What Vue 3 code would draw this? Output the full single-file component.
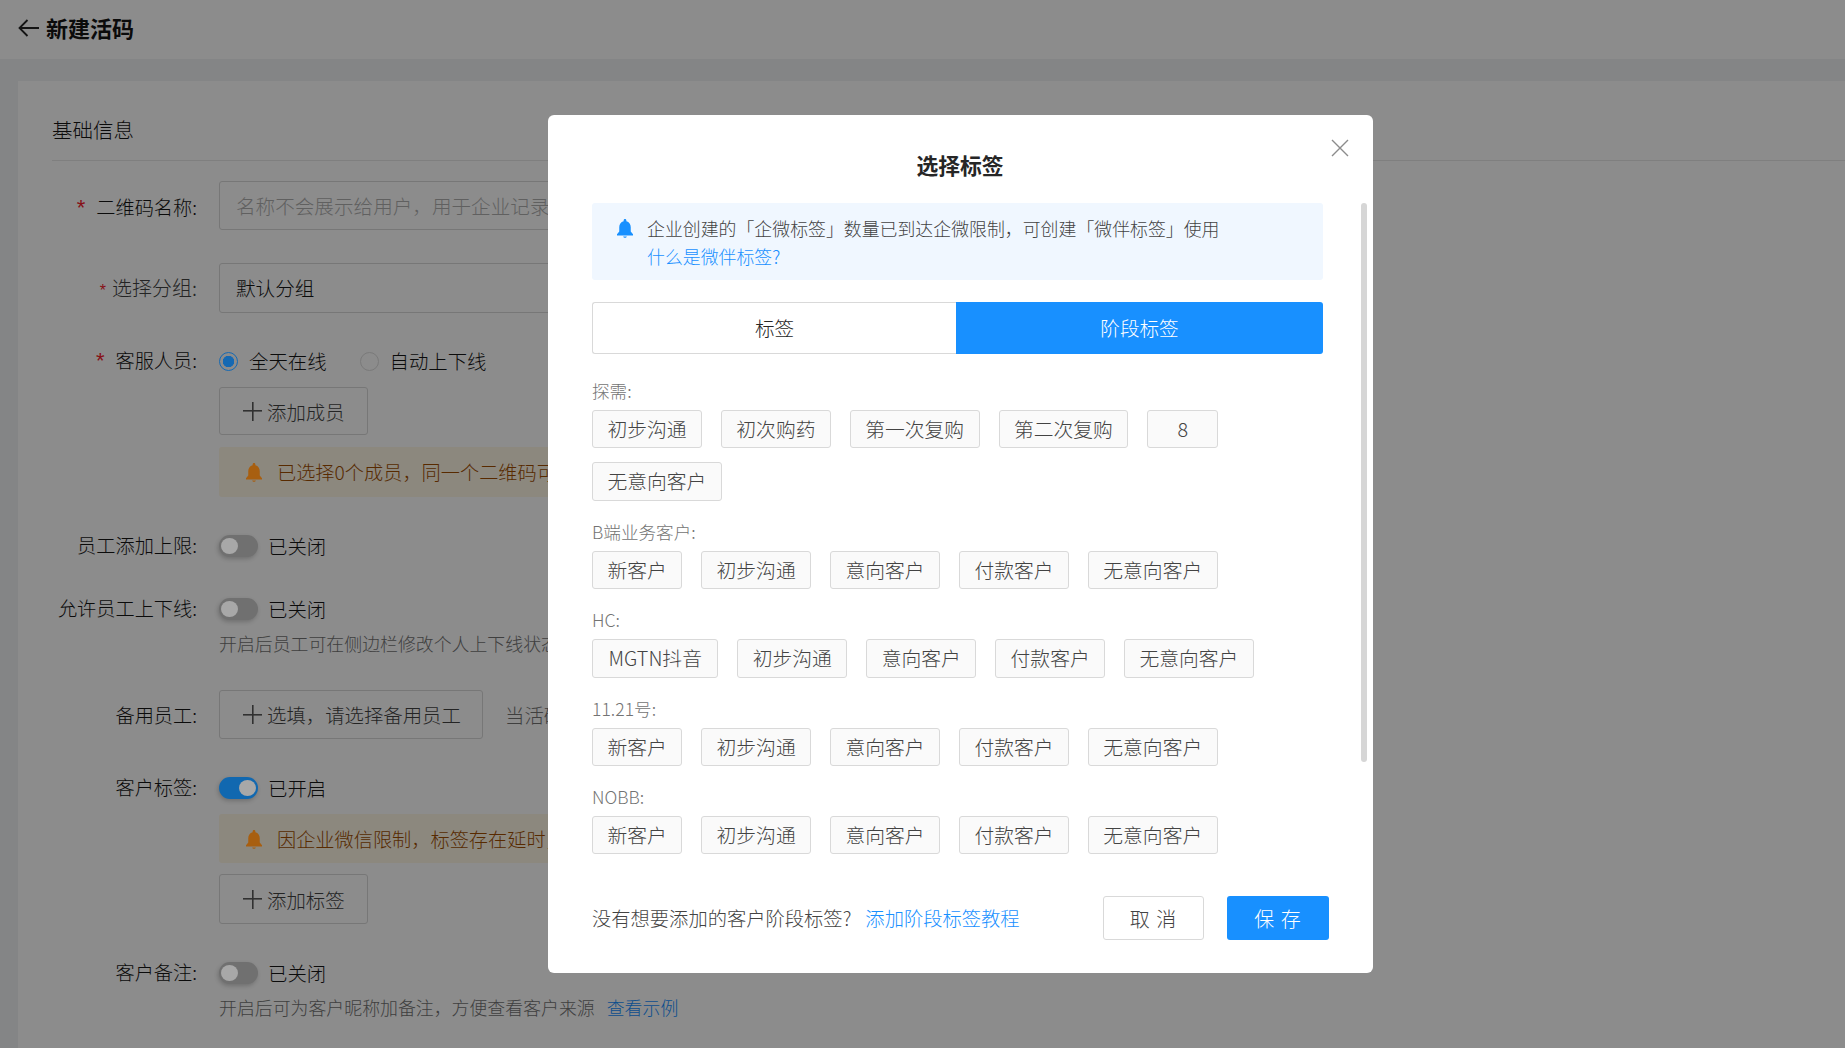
<script setup>
const groups = [
  { name: '探需:', tags: ['初步沟通', '初次购药', '第一次复购', '第二次复购', '8', '无意向客户'] },
  { name: 'B端业务客户:', tags: ['新客户', '初步沟通', '意向客户', '付款客户', '无意向客户'] },
  { name: 'HC:', tags: ['MGTN抖音', '初步沟通', '意向客户', '付款客户', '无意向客户'] },
  { name: '11.21号:', tags: ['新客户', '初步沟通', '意向客户', '付款客户', '无意向客户'] },
  { name: 'NOBB:', tags: ['新客户', '初步沟通', '意向客户', '付款客户', '无意向客户'] }
]
const bell = 'M8 0.8c-.7 0-1.1.5-1.1 1.2v.5C4.6 3.1 3.4 5 3.4 7.4v3.4L1.6 13v.9h12.8V13l-1.8-2.2V7.4c0-2.4-1.2-4.3-3.5-4.9V2C9.1 1.3 8.7.8 8 .8zM6.5 14.7c.2.6.8 1 1.5 1s1.3-.4 1.5-1z'
</script>

<template>
  <div class="page">
    <header class="head">
      <svg class="back" viewBox="0 0 21 18" width="21" height="18"><path d="M21 9H1.5M9.5 1l-8 8 8 8" fill="none" stroke="#262626" stroke-width="1.8"/></svg>
      <span class="head-title">新建活码</span>
    </header>
    <main class="card">
      <h2 class="section">基础信息</h2>
      <div class="form">
        <div class="row first">
          <label class="label"><i class="star">*</i>二维码名称:</label>
          <div class="input placeholder">名称不会展示给用户，用于企业记录和</div>
        </div>
        <div class="row">
          <label class="label soft"><i class="star small">*</i>选择分组:</label>
          <div class="input tall">默认分组</div>
        </div>
        <div class="row line">
          <label class="label"><i class="star">*</i>客服人员:</label>
          <span class="radio on"></span><span class="radio-text">全天在线</span>
          <span class="radio second"></span><span class="radio-text">自动上下线</span>
        </div>
        <div class="sub"><button class="ghost"><span class="plus"></span>添加成员</button></div>
        <div class="sub notice">
          <svg class="notice-bell" viewBox="0 0 16 16" width="20" height="20"><path :d="bell"/></svg>
          <span>已选择0个成员，同一个二维码可选</span>
        </div>
        <div class="row line gap34">
          <label class="label">员工添加上限:</label>
          <span class="switch"></span><span class="switch-text">已关闭</span>
        </div>
        <div class="row line">
          <label class="label">允许员工上下线:</label>
          <span class="switch"></span><span class="switch-text">已关闭</span>
        </div>
        <div class="sub help">开启后员工可在侧边栏修改个人上下线状态</div>
        <div class="row gap34">
          <label class="label mid">备用员工:</label>
          <button class="ghost wide"><span class="plus"></span>选填，请选择备用员工</button>
          <span class="hint">当活码</span>
        </div>
        <div class="row line gap34">
          <label class="label">客户标签:</label>
          <span class="switch active"></span><span class="switch-text">已开启</span>
        </div>
        <div class="sub notice low">
          <svg class="notice-bell" viewBox="0 0 16 16" width="20" height="20"><path :d="bell"/></svg>
          <span>因企业微信限制，标签存在延时，请</span>
        </div>
        <div class="sub"><button class="ghost tallbtn"><span class="plus"></span>添加标签</button></div>
        <div class="row line gap34">
          <label class="label">客户备注:</label>
          <span class="switch"></span><span class="switch-text">已关闭</span>
        </div>
        <div class="sub help">开启后可为客户昵称加备注，方便查看客户来源<a class="help-link">查看示例</a></div>
      </div>
    </main>

    <div class="mask"></div>

    <section class="modal">
      <button class="close" aria-label="关闭">
        <svg viewBox="0 0 18 18" width="18" height="18"><path d="M1 1l16 16M17 1L1 17" fill="none" stroke="#8c8c8c" stroke-width="1.4"/></svg>
      </button>
      <h3 class="modal-title">选择标签</h3>
      <div class="scrollbar"></div>
      <div class="tip">
        <svg viewBox="0 0 16 16" width="20" height="20"><path :d="bell" fill="#1890ff"/></svg>
        <p>企业创建的「企微标签」数量已到达企微限制，可创建「微伴标签」使用<br><a>什么是微伴标签?</a></p>
      </div>
      <div class="tabs">
        <div class="tab">标签</div>
        <div class="tab selected">阶段标签</div>
      </div>
      <div v-for="g in groups" :key="g.name" class="group">
        <div class="group-name">{{ g.name }}</div>
        <div class="tags">
          <span v-for="t in g.tags" :key="t" class="tag" :class="{ latin: t === 'MGTN抖音' }">{{ t }}</span>
        </div>
      </div>
      <footer class="foot">
        <span class="foot-text">没有想要添加的客户阶段标签?</span>
        <a class="foot-link">添加阶段标签教程</a>
        <button class="btn cancel">取 消</button>
        <button class="btn save">保 存</button>
      </footer>
    </section>
  </div>
</template>

<style>
html, body { margin: 0; overflow: hidden; height: 100%; }
</style>

<style scoped>
.page {
  position: relative;
  width: 1845px;
  height: 1048px;
  overflow: hidden;
  background: #f0f2f5;
  font-family: "Noto Sans CJK SC", "Liberation Sans", sans-serif;
  font-size: 19.4px;
  font-weight: 300;
  color: #141414;
}
.head {
  height: 59px;
  box-sizing: border-box;
  padding: 0 0 4px 18px;
  background: #fff;
  display: flex;
  align-items: center;
  gap: 7px;
}
.head-title { font-size: 22px; font-weight: 700; margin-bottom: 2px; }
.card {
  margin: 22px 0 0 18px;
  background: #fff;
  padding: 0 0 40px 34px;
  height: 1000px;
}
.section {
  margin: 0;
  height: 79px;
  line-height: 96px;
  font-size: 20.5px;
  font-weight: 300;
  border-bottom: 1px solid #e8e8e8;
  overflow: hidden;
}
.row { display: flex; align-items: center; margin-top: 33px; }
.row.first { margin-top: 20px; }
.row.gap34 { margin-top: 34px; }
.row.line { height: 30px; }
.label {
  width: 145px;
  flex: none;
  margin: 0 22px 2px 0;
  text-align: right;
  white-space: nowrap;
  font-size: 19.2px;
}
.first .label { margin: 2px 22px 0 0; }
.label.mid { margin-bottom: 0; }
.label.soft { color: #434343; font-size: 20px; }
.star {
  font-style: normal;
  color: #f5222d;
  font-family: "Liberation Sans", sans-serif;
  margin-right: 11px;
  font-size: 22px;
}
.star.small { font-size: 16px; margin-right: 6px; }
.input {
  width: 1000px;
  height: 49px;
  box-sizing: border-box;
  border: 1px solid #d9d9d9;
  border-radius: 3px;
  padding-left: 16px;
  line-height: 47px;
  font-size: 19.6px;
  white-space: nowrap;
  overflow: hidden;
}
.input.tall { height: 50px; line-height: 48px; }
.input.placeholder { color: #b0b0b0; }
.radio {
  position: relative;
  z-index: 2;
  width: 19px;
  height: 19px;
  box-sizing: border-box;
  border: 1px solid #7a7a7a;
  border-radius: 50%;
  flex: none;
}
.radio.on { border-color: #1569b3; background: radial-gradient(circle, #1569b3 0 5.5px, #8c8c8c 6px); }
.radio.second { margin-left: 33px; }
.radio-text { margin: 0 0 2px 11px; }
.sub { margin: 11px 0 0 167px; }
.ghost {
  font: inherit;
  color: #434343;
  background: #fff;
  border: 1px solid #d9d9d9;
  border-radius: 3px;
  width: 149px;
  height: 48px;
  padding: 0 0 0 23px;
  display: flex;
  align-items: center;
  gap: 5px;
  white-space: nowrap;
}
.ghost.wide { width: 264px; height: 49px; }
.ghost.tallbtn { height: 50px; }
.plus {
  width: 19px;
  height: 19px;
  flex: none;
  background:
    linear-gradient(#595959, #595959) center / 100% 1.6px no-repeat,
    linear-gradient(#595959, #595959) center / 1.6px 100% no-repeat;
}
.hint { margin-left: 22px; color: #737373; white-space: nowrap; }
.notice {
  width: 1000px;
  height: 50px;
  margin-top: 12px;
  box-sizing: border-box;
  background: #fff7e6;
  border-radius: 3px;
  padding-left: 25px;
  display: flex;
  align-items: center;
  gap: 13px;
  color: #a04e00;
  font-size: 19.2px;
  white-space: nowrap;
}
.notice.low { height: 49px; margin-top: 11px; }
.notice-bell { position: relative; z-index: 2; fill: #a85f10; flex: none; }
.switch {
  position: relative;
  z-index: 2;
  width: 39px;
  height: 22px;
  flex: none;
  border-radius: 11px;
  background: #707070;
  box-shadow: -1px 2px 4px rgba(0, 0, 0, .2);
}
.switch::after {
  content: "";
  position: absolute;
  left: 2px;
  top: 3px;
  width: 17px;
  height: 16px;
  border-radius: 50%;
  background: #a8a8a8;
}
.switch.active { background: #1168b0; }
.switch.active::after { left: 20px; }
.switch-text { margin: 0 0 2px 10px; }
.help {
  margin-top: 6px;
  height: 26px;
  line-height: 26px;
  font-size: 17.9px;
  color: #737373;
  white-space: nowrap;
}
.help-link { color: #1890ff; margin-left: 12px; }
.mask { position: absolute; inset: 0; background: rgba(0, 0, 0, .45); }
.modal {
  position: absolute;
  z-index: 3;
  left: 548px;
  top: 115px;
  width: 825px;
  height: 858px;
  box-sizing: border-box;
  background: #fff;
  border-radius: 6px;
  padding: 0 50px 0 44px;
  overflow: hidden;
}
.close {
  position: absolute;
  right: 24px;
  top: 24px;
  border: 0;
  padding: 0;
  width: 18px;
  height: 18px;
  background: none;
}
.modal-title {
  margin: 0;
  height: 88px;
  padding-left: 5px;
  line-height: 99px;
  text-align: center;
  font-size: 21.8px;
  font-weight: 700;
  color: #262626;
}
.scrollbar {
  position: absolute;
  left: 813px;
  top: 88px;
  width: 6px;
  height: 559px;
  border-radius: 3px;
  background: #d6d6d6;
}
.tip {
  height: 77px;
  box-sizing: border-box;
  background: #f0f7ff;
  border-radius: 3px;
  padding: 10.5px 0 0 23px;
  display: flex;
  gap: 12px;
  color: #434343;
  font-size: 17.9px;
}
.tip svg { margin-top: 4px; flex: none; }
.tip p { margin: 0; line-height: 28px; white-space: nowrap; }
.tip a { color: #1890ff; }
.tabs {
  margin-top: 22px;
  height: 52px;
  display: flex;
  font-size: 19.6px;
}
.tab {
  flex: none;
  width: 364px;
  box-sizing: border-box;
  border: 1px solid #d9d9d9;
  border-right: 0;
  border-radius: 3px 0 0 3px;
  text-align: center;
  line-height: 50px;
  color: #262626;
}
.tab.selected {
  width: 367px;
  background: #1890ff;
  border: 0;
  border-radius: 0 3px 3px 0;
  color: #fff;
  line-height: 52px;
}
.group { margin-bottom: 19px; }
.tabs + .group { margin-top: 25px; }
.group-name { height: 26px; line-height: 24px; color: #737373; font-size: 17.6px; }
.tags { margin-top: 5px; display: flex; flex-wrap: wrap; gap: 14px 19px; }
.tag {
  height: 38.4px;
  min-width: 71px;
  box-sizing: border-box;
  padding: 0 14.4px;
  line-height: 36px;
  text-align: center;
  background: #fafafa;
  border: 1px solid #d9d9d9;
  border-radius: 3px;
  color: #434343;
  font-size: 19.8px;
  white-space: nowrap;
}
.tag.latin { padding: 0 15.4px; }
.foot {
  position: absolute;
  left: 44px;
  right: 44px;
  top: 781px;
  height: 44px;
  display: flex;
  align-items: center;
  font-size: 19.3px;
}
.foot-text { color: #434343; }
.foot-link { color: #1890ff; margin-left: 14px; }
.btn {
  font: inherit;
  font-size: 20px;
  letter-spacing: 1px;
  height: 44px;
  border-radius: 3px;
  padding: 0;
}
.cancel { width: 101px; margin-left: auto; background: #fff; border: 1px solid #d9d9d9; color: #434343; }
.save { width: 102px; margin-left: 23px; background: #1890ff; border: 0; color: #fff; }
</style>
